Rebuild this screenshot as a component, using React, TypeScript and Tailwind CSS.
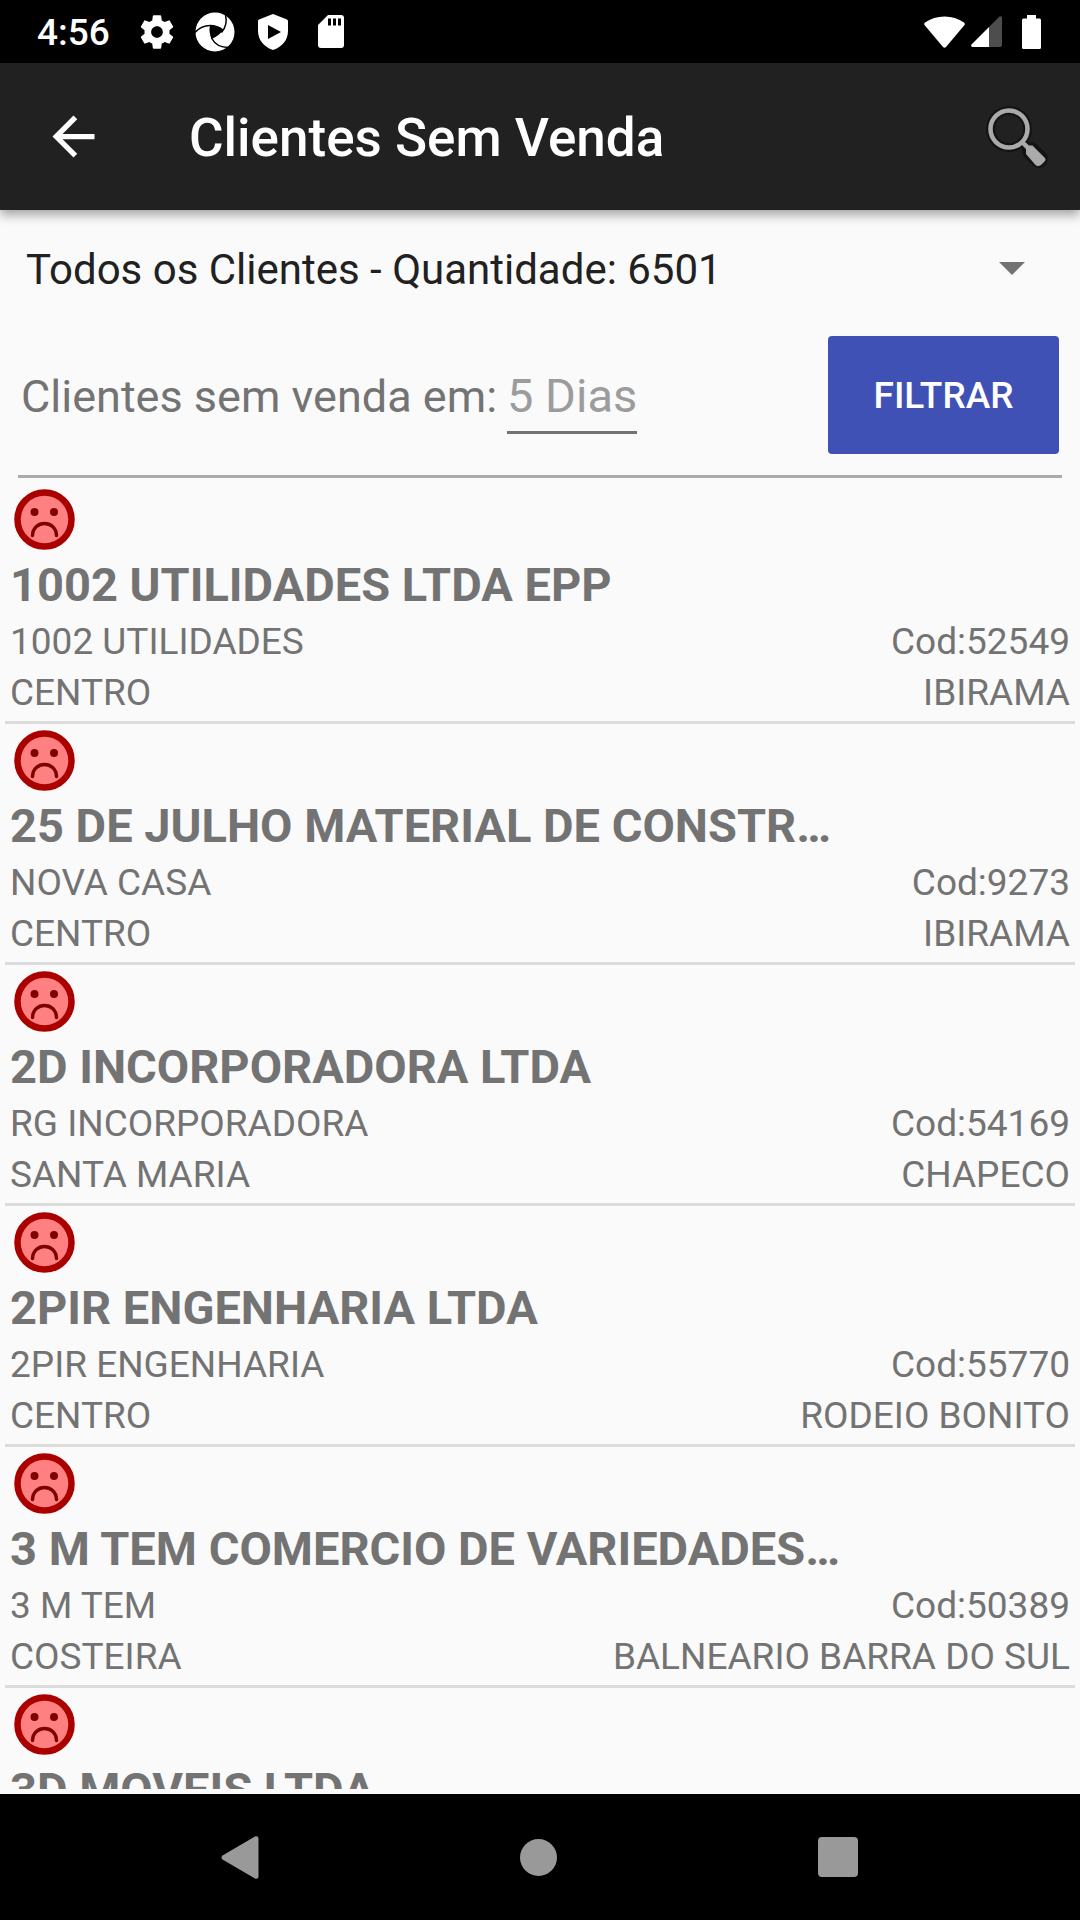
import React from "react";

type Client = {
  name: string;
  alias?: string;
  code?: string;
  district?: string;
  city?: string;
};

const clients: Client[] = [
  { name: "1002 UTILIDADES LTDA EPP", alias: "1002 UTILIDADES", code: "52549", district: "CENTRO", city: "IBIRAMA" },
  { name: "25 DE JULHO MATERIAL DE CONSTR…", alias: "NOVA CASA", code: "9273", district: "CENTRO", city: "IBIRAMA" },
  { name: "2D INCORPORADORA LTDA", alias: "RG INCORPORADORA", code: "54169", district: "SANTA MARIA", city: "CHAPECO" },
  { name: "2PIR ENGENHARIA LTDA", alias: "2PIR ENGENHARIA", code: "55770", district: "CENTRO", city: "RODEIO BONITO" },
  { name: "3 M TEM COMERCIO DE VARIEDADES…", alias: "3 M TEM", code: "50389", district: "COSTEIRA", city: "BALNEARIO BARRA DO SUL" },
  { name: "3D MOVEIS LTDA" },
];

function GearIcon() {
  return (
    <svg viewBox="0 0 24 24" className="size-10" fill="#fff" aria-hidden="true">
      <path d="M19.43 12.98c.04-.32.07-.64.07-.98s-.03-.66-.07-.98l2.11-1.65c.19-.15.24-.42.12-.64l-2-3.46c-.12-.22-.39-.3-.61-.22l-2.49 1c-.52-.4-1.08-.73-1.69-.98l-.38-2.65C14.46 2.18 14.25 2 14 2h-4c-.25 0-.46.18-.49.42l-.38 2.65c-.61.25-1.17.59-1.69.98l-2.49-1c-.23-.09-.49 0-.61.22l-2 3.46c-.13.22-.07.49.12.64l2.11 1.65c-.04.32-.07.65-.07.98s.03.66.07.98l-2.11 1.65c-.19.15-.24.42-.12.64l2 3.46c.12.22.39.3.61.22l2.49-1c.52.4 1.08.73 1.69.98l.38 2.65c.03.24.24.42.49.42h4c.25 0 .46-.18.49-.42l.38-2.65c.61-.25 1.17-.59 1.69-.98l2.49 1c.23.09.49 0 .61-.22l2-3.46c.12-.22.07-.49-.12-.64l-2.11-1.65zM12 15.5c-1.93 0-3.5-1.57-3.5-3.5s1.57-3.5 3.5-3.5 3.5 1.57 3.5 3.5-1.57 3.5-3.5 3.5z" />
    </svg>
  );
}

function SwirlIcon() {
  return (
    <svg viewBox="0 0 40 40" className="size-10" aria-hidden="true">
      <circle cx="20" cy="20" r="19.5" fill="#fff" />
      <path d="M15 13 Q23 13.500 28 18 Q24 24 16.500 27 Q13.500 20 15 13Z" fill="#000" />
      <g fill="none" stroke="#000" strokeWidth="1.500">
        <path d="M0 20.500 Q6 13.500 15 13.500 Q22 13.500 28 18" />
        <path d="M30.500 3 Q33 13 26.500 20.500" />
        <path d="M36 35.500 Q22 36.500 16.500 26" />
      </g>
    </svg>
  );
}

function ShieldIcon() {
  return (
    <svg viewBox="0 0 30 36" className="h-9 w-[30px]" aria-hidden="true">
      <path d="M15 0 29 5.500q1 .5 1 1.500v10c0 9-6 16-15 19C6 33 0 26 0 17V7q0-1 1-1.500z" fill="#fff" />
      <path d="M10 11v14l13-7z" fill="#000" />
    </svg>
  );
}

function SdCardIcon() {
  return (
    <svg viewBox="0 0 26 34" className="h-[34px] w-[26px]" aria-hidden="true">
      <path d="M10 0h13a3 3 0 0 1 3 3v27a3 3 0 0 1-3 3H3a3 3 0 0 1-3-3V10z" fill="#fff" />
      <path d="M10 3.500h3v7h-3zM15 3.500h3v7h-3zM20 3.500h3v7h-3z" fill="#000" />
    </svg>
  );
}

function StatusBar() {
  return (
    <div className="flex h-[63px] shrink-0 items-center bg-black pr-[39px] pl-[37px] text-white">
      <span className="w-[100px] pt-0.5 text-[37px] leading-[63px] font-medium">4:56</span>
      <div className="flex flex-1 items-center">
        <GearIcon />
        <span className="ml-[18px]"><SwirlIcon /></span>
        <span className="ml-[23px]"><ShieldIcon /></span>
        <span className="ml-[30px]"><SdCardIcon /></span>
      </div>
      <svg viewBox="0 0 41 32" className="h-8 w-[41px]" fill="#fff" aria-hidden="true">
        <path d="M.5 9Q-.3 7.500 1 6.500Q9.500.500 20.500.500T40 6.500Q41.300 7.500 40.500 9L22 31Q20.500 32.500 19 31Z" />
      </svg>
      <svg viewBox="0 0 31 31" className="ml-1.5 h-[31px] w-[31px]" aria-hidden="true">
        <path d="M31 2v27q0 2-2 2H18V11L28.500.5Q31-.5 31 2z" fill="#4d4d4d" />
        <path d="M18 11v20H1.500Q-.5 30.500.5 28.500z" fill="#fff" />
      </svg>
      <svg viewBox="0 0 19 34" className="ml-5 h-[34px] w-[19px]" fill="#fff" aria-hidden="true">
        <path d="M5 0h9v3.500h3.500a1.500 1.500 0 0 1 1.500 1.500v27.500a1.500 1.500 0 0 1-1.500 1.500h-16A1.500 1.500 0 0 1 0 32.500V5a1.500 1.500 0 0 1 1.500-1.500H5z" />
      </svg>
    </div>
  );
}

function AppBar() {
  return (
    <header className="z-10 flex h-[147px] shrink-0 items-center bg-[#212121] pr-[30px] pl-[42px] text-white shadow-[0_5px_10px_rgba(0,0,0,0.35)]">
      <button type="button" aria-label="Voltar" className="size-[63px]">
        <svg viewBox="0 0 24 24" fill="#fff" aria-hidden="true">
          <path d="M20 11H7.830l5.590-5.590L12 4l-8 8 8 8 1.410-1.410L7.830 13H20v-2z" />
        </svg>
      </button>
      <h1 className="ml-[84px] flex-1 pt-1 text-[53px] leading-[63px] font-medium">Clientes Sem Venda</h1>
      <button type="button" aria-label="Pesquisar" className="size-[66px]">
        <svg viewBox="0 0 66 66" aria-hidden="true">
          <g fill="none" stroke="#141414" strokeLinecap="round">
            <circle cx="25" cy="25" r="18.500" strokeWidth="9" />
            <path d="M38 38l6 6" strokeWidth="9" />
            <path d="M47 47l8 8" strokeWidth="18" />
          </g>
          <circle cx="25" cy="25" r="18.500" fill="none" stroke="#aaa" strokeWidth="4.500" />
          <path d="M37 40l3-3 5 4.500h3.500l12 12q2 2 0 4l-3.500 3.500q-3 2-5.500 0L42 50v-5z" fill="#aaa" />
        </svg>
      </button>
    </header>
  );
}

function SadFace() {
  return (
    <svg viewBox="0 0 61 61" className="size-[61px]" role="img" aria-label="Sem venda">
      <circle cx="30.500" cy="30.500" r="27" fill="#ff8080" stroke="#a00" strokeWidth="6.500" />
      <circle cx="20.500" cy="23" r="4" fill="#800000" />
      <circle cx="40" cy="23" r="4" fill="#800000" />
      <path d="M18.500 46.500C19 30.500 42 30.500 42.500 46.500" fill="none" stroke="#800000" strokeWidth="3.500" strokeLinecap="round" />
    </svg>
  );
}

function ClientRow({ client }: { client: Client }) {
  return (
    <li className="border-b-[3px] border-[#dcdcdc] px-[5px] pb-[3px]">
      <div className="h-[73px] pt-1.5 pl-1">
        <SadFace />
      </div>
      <h2 className="truncate pb-0.5 text-[47px] leading-[58px] font-bold">{client.name}</h2>
      <div className="flex justify-between text-[37px] leading-[51px]">
        <span>{client.alias}</span>
        {client.code && <span>Cod:{client.code}</span>}
      </div>
      <div className="flex justify-between text-[37px] leading-[51px]">
        <span>{client.district}</span>
        <span>{client.city}</span>
      </div>
    </li>
  );
}

export default function App() {
  return (
    <div className="flex h-screen flex-col overflow-hidden bg-[#fafafa] font-['Roboto',sans-serif] text-[#737373]">
      <StatusBar />
      <AppBar />
      <main className="flex min-h-0 flex-1 flex-col pb-[5px]">
        <div className="relative shrink-0">
          <select
            aria-label="Filtro de clientes"
            className="h-[118px] w-full appearance-none bg-transparent pr-24 pl-[26px] text-[42px] text-[#212121] outline-none"
          >
            <option>Todos os Clientes - Quantidade: 6501</option>
          </select>
          <svg viewBox="0 0 26 13" className="pointer-events-none absolute top-[52px] right-[55px] h-[13px] w-[26px]" fill="#737373" aria-hidden="true">
            <path d="M0 0h26L13 13z" />
          </svg>
        </div>
        <form className="mx-[18px] flex shrink-0 items-center border-b-[3px] border-[#aaa] pt-2 pr-[3px] pb-[21px] pl-[3px] text-[47px]" onSubmit={(e) => e.preventDefault()}>
          <label htmlFor="dias" className="pt-1 text-[45px] leading-[56px]">Clientes sem venda em:</label>
          <input
            id="dias"
            placeholder="5 Dias"
            className="ml-2.5 h-[78px] w-[130px] border-b-[3px] border-[#737373] bg-transparent pt-1 outline-none placeholder:text-[#9c9c9c]"
          />
          <button type="submit" className="ml-auto h-[118px] w-[231px] rounded bg-[#3f51b5] pt-0.5 text-[37px] font-medium text-white">
            FILTRAR
          </button>
        </form>
        <ul className="mx-[5px] mt-[5px] min-h-0 flex-1 overflow-hidden">
          {clients.map((client) => (
            <ClientRow key={client.name} client={client} />
          ))}
        </ul>
      </main>
      <nav className="flex h-[126px] shrink-0 items-center bg-black pr-[92px] pl-[90px]">
        <button type="button" aria-label="Voltar" className="flex flex-1 justify-center">
          <svg viewBox="0 0 38 43" className="h-[43px] w-[38px]" fill="#999" aria-hidden="true">
            <path d="M34 .5Q37.500-.5 37.500 3v37Q37.500 43.500 34 42.500L1.500 23.500Q-.5 21.500 1.500 19.500z" />
          </svg>
        </button>
        <button type="button" aria-label="Início" className="flex flex-1 justify-center">
          <span className="size-[37px] rounded-full bg-[#999]" />
        </button>
        <button type="button" aria-label="Recentes" className="flex flex-1 justify-center">
          <span className="size-10 rounded bg-[#999]" />
        </button>
      </nav>
    </div>
  );
}
